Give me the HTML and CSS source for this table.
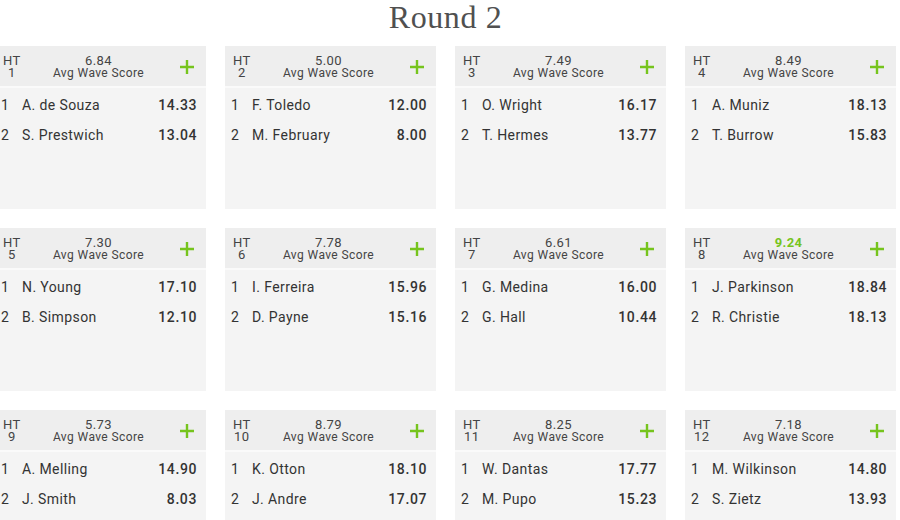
FILE: index.html
```html
<!DOCTYPE html>
<html>
<head>
<meta charset="utf-8">
<link rel="stylesheet" href="styles.css">
</head>
<body>
<div class="wrap">
  <h1 class="title">Round 2</h1>
  <div class="grid">
    <div class="card">
      <div class="head"><div class="ht"><div>HT</div><div>1</div></div><div class="avg"><div class="num">6.84</div><div>Avg Wave Score</div></div><div class="plus"><svg viewBox="0 0 14 14"><path d="M7 0v14M0 7h14"/></svg></div></div>
      <div class="rows">
        <div class="row"><span class="rk">1</span><span class="nm">A. de Souza</span><span class="sc">14.33</span></div>
        <div class="row"><span class="rk">2</span><span class="nm">S. Prestwich</span><span class="sc">13.04</span></div>
      </div>
    </div>
    <div class="card">
      <div class="head"><div class="ht"><div>HT</div><div>2</div></div><div class="avg"><div class="num">5.00</div><div>Avg Wave Score</div></div><div class="plus"><svg viewBox="0 0 14 14"><path d="M7 0v14M0 7h14"/></svg></div></div>
      <div class="rows">
        <div class="row"><span class="rk">1</span><span class="nm">F. Toledo</span><span class="sc">12.00</span></div>
        <div class="row"><span class="rk">2</span><span class="nm">M. February</span><span class="sc">8.00</span></div>
      </div>
    </div>
    <div class="card">
      <div class="head"><div class="ht"><div>HT</div><div>3</div></div><div class="avg"><div class="num">7.49</div><div>Avg Wave Score</div></div><div class="plus"><svg viewBox="0 0 14 14"><path d="M7 0v14M0 7h14"/></svg></div></div>
      <div class="rows">
        <div class="row"><span class="rk">1</span><span class="nm">O. Wright</span><span class="sc">16.17</span></div>
        <div class="row"><span class="rk">2</span><span class="nm">T. Hermes</span><span class="sc">13.77</span></div>
      </div>
    </div>
    <div class="card">
      <div class="head"><div class="ht"><div>HT</div><div>4</div></div><div class="avg"><div class="num">8.49</div><div>Avg Wave Score</div></div><div class="plus"><svg viewBox="0 0 14 14"><path d="M7 0v14M0 7h14"/></svg></div></div>
      <div class="rows">
        <div class="row"><span class="rk">1</span><span class="nm">A. Muniz</span><span class="sc">18.13</span></div>
        <div class="row"><span class="rk">2</span><span class="nm">T. Burrow</span><span class="sc">15.83</span></div>
      </div>
    </div>
    <div class="card">
      <div class="head"><div class="ht"><div>HT</div><div>5</div></div><div class="avg"><div class="num">7.30</div><div>Avg Wave Score</div></div><div class="plus"><svg viewBox="0 0 14 14"><path d="M7 0v14M0 7h14"/></svg></div></div>
      <div class="rows">
        <div class="row"><span class="rk">1</span><span class="nm">N. Young</span><span class="sc">17.10</span></div>
        <div class="row"><span class="rk">2</span><span class="nm">B. Simpson</span><span class="sc">12.10</span></div>
      </div>
    </div>
    <div class="card">
      <div class="head"><div class="ht"><div>HT</div><div>6</div></div><div class="avg"><div class="num">7.78</div><div>Avg Wave Score</div></div><div class="plus"><svg viewBox="0 0 14 14"><path d="M7 0v14M0 7h14"/></svg></div></div>
      <div class="rows">
        <div class="row"><span class="rk">1</span><span class="nm">I. Ferreira</span><span class="sc">15.96</span></div>
        <div class="row"><span class="rk">2</span><span class="nm">D. Payne</span><span class="sc">15.16</span></div>
      </div>
    </div>
    <div class="card">
      <div class="head"><div class="ht"><div>HT</div><div>7</div></div><div class="avg"><div class="num">6.61</div><div>Avg Wave Score</div></div><div class="plus"><svg viewBox="0 0 14 14"><path d="M7 0v14M0 7h14"/></svg></div></div>
      <div class="rows">
        <div class="row"><span class="rk">1</span><span class="nm">G. Medina</span><span class="sc">16.00</span></div>
        <div class="row"><span class="rk">2</span><span class="nm">G. Hall</span><span class="sc">10.44</span></div>
      </div>
    </div>
    <div class="card">
      <div class="head"><div class="ht"><div>HT</div><div>8</div></div><div class="avg"><div class="num best">9.24</div><div>Avg Wave Score</div></div><div class="plus"><svg viewBox="0 0 14 14"><path d="M7 0v14M0 7h14"/></svg></div></div>
      <div class="rows">
        <div class="row"><span class="rk">1</span><span class="nm">J. Parkinson</span><span class="sc">18.84</span></div>
        <div class="row"><span class="rk">2</span><span class="nm">R. Christie</span><span class="sc">18.13</span></div>
      </div>
    </div>
    <div class="card">
      <div class="head"><div class="ht"><div>HT</div><div>9</div></div><div class="avg"><div class="num">5.73</div><div>Avg Wave Score</div></div><div class="plus"><svg viewBox="0 0 14 14"><path d="M7 0v14M0 7h14"/></svg></div></div>
      <div class="rows">
        <div class="row"><span class="rk">1</span><span class="nm">A. Melling</span><span class="sc">14.90</span></div>
        <div class="row"><span class="rk">2</span><span class="nm">J. Smith</span><span class="sc">8.03</span></div>
      </div>
    </div>
    <div class="card">
      <div class="head"><div class="ht"><div>HT</div><div>10</div></div><div class="avg"><div class="num">8.79</div><div>Avg Wave Score</div></div><div class="plus"><svg viewBox="0 0 14 14"><path d="M7 0v14M0 7h14"/></svg></div></div>
      <div class="rows">
        <div class="row"><span class="rk">1</span><span class="nm">K. Otton</span><span class="sc">18.10</span></div>
        <div class="row"><span class="rk">2</span><span class="nm">J. Andre</span><span class="sc">17.07</span></div>
      </div>
    </div>
    <div class="card">
      <div class="head"><div class="ht"><div>HT</div><div>11</div></div><div class="avg"><div class="num">8.25</div><div>Avg Wave Score</div></div><div class="plus"><svg viewBox="0 0 14 14"><path d="M7 0v14M0 7h14"/></svg></div></div>
      <div class="rows">
        <div class="row"><span class="rk">1</span><span class="nm">W. Dantas</span><span class="sc">17.77</span></div>
        <div class="row"><span class="rk">2</span><span class="nm">M. Pupo</span><span class="sc">15.23</span></div>
      </div>
    </div>
    <div class="card">
      <div class="head"><div class="ht"><div>HT</div><div>12</div></div><div class="avg"><div class="num">7.18</div><div>Avg Wave Score</div></div><div class="plus"><svg viewBox="0 0 14 14"><path d="M7 0v14M0 7h14"/></svg></div></div>
      <div class="rows">
        <div class="row"><span class="rk">1</span><span class="nm">M. Wilkinson</span><span class="sc">14.80</span></div>
        <div class="row"><span class="rk">2</span><span class="nm">S. Zietz</span><span class="sc">13.93</span></div>
      </div>
    </div>
  </div>
</div>
</body>
</html>
```

FILE: styles.css
```css
html, body {
  margin: 0;
  padding: 0;
  background: #ffffff;
  overflow: hidden;
}
body {
  font-family: Roboto, "Liberation Sans", sans-serif;
  color: #333;
}
.wrap {
  width: 901px;
  margin-left: -5px;
}
.title {
  margin: 0;
  height: 46px;
  font-family: "Liberation Serif", serif;
  font-weight: normal;
  font-size: 32px;
  line-height: 34px;
  letter-spacing: 0.6px;
  color: #505050;
  text-align: center;
}
.grid {
  display: grid;
  grid-template-columns: repeat(4, 211px);
  column-gap: 19px;
  row-gap: 19px;
}
.card {
  height: 163px;
  background: #f4f4f4;
}
.head {
  display: grid;
  grid-template-columns: 1fr auto 1fr;
  align-items: center;
  height: 42px;
  box-sizing: border-box;
  padding: 1px 12px 0 8px;
  background: #eeeeee;
  border-bottom: 2px solid #fafafa;
  font-size: 13px;
  line-height: 12px;
  color: #444;
}
.ht {
  justify-self: start;
  text-align: center;
  letter-spacing: 0.3px;
}
.avg {
  text-align: center;
  font-size: 12px;
  letter-spacing: 0.4px;
}
.num {
  font-size: 13px;
}
.num.best {
  color: #76c41d;
  font-weight: 700;
}
.plus {
  justify-self: end;
  display: flex;
}
.plus svg {
  width: 14px;
  height: 14px;
  stroke: #76c41d;
  stroke-width: 2.4;
  fill: none;
}
.rows {
  padding-top: 2px;
}
.row {
  display: flex;
  align-items: center;
  height: 30px;
  padding: 0 9px 0 6px;
  font-size: 14px;
  letter-spacing: 0.4px;
}
.rk {
  width: 21px;
}
.nm {
  flex: 1;
}
.sc {
  font-weight: 500;
  letter-spacing: 0.6px;
}
```
